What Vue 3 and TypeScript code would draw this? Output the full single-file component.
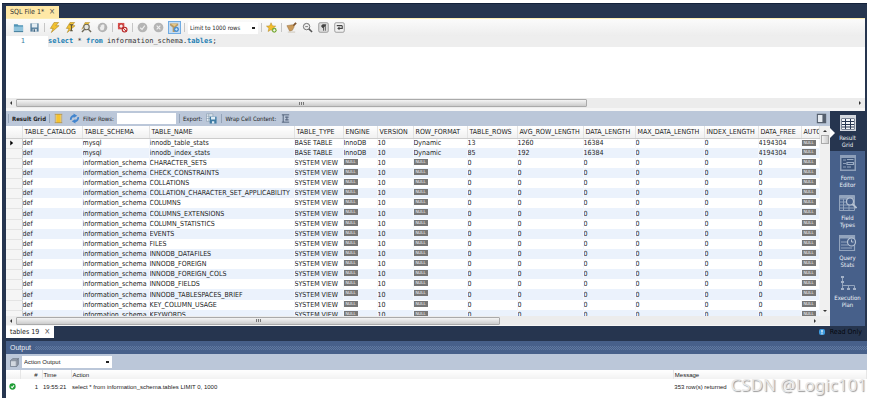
<script setup lang="ts">
import { ref } from 'vue'

interface Column {
  name: string
  width: string
}

const columns: Column[] = [
  { name: 'TABLE_CATALOG', width: '60px' },
  { name: 'TABLE_SCHEMA', width: '67px' },
  { name: 'TABLE_NAME', width: '145px' },
  { name: 'TABLE_TYPE', width: '49px' },
  { name: 'ENGINE', width: '34px' },
  { name: 'VERSION', width: '36px' },
  { name: 'ROW_FORMAT', width: '54px' },
  { name: 'TABLE_ROWS', width: '50px' },
  { name: 'AVG_ROW_LENGTH', width: '66px' },
  { name: 'DATA_LENGTH', width: '52px' },
  { name: 'MAX_DATA_LENGTH', width: '69px' },
  { name: 'INDEX_LENGTH', width: '54px' },
  { name: 'DATA_FREE', width: '43px' },
  { name: 'AUTO', width: 'auto' },
]

type Cell = string | null

const views: string[] = [
  'CHARACTER_SETS',
  'CHECK_CONSTRAINTS',
  'COLLATIONS',
  'COLLATION_CHARACTER_SET_APPLICABILITY',
  'COLUMNS',
  'COLUMNS_EXTENSIONS',
  'COLUMN_STATISTICS',
  'EVENTS',
  'FILES',
  'INNODB_DATAFILES',
  'INNODB_FOREIGN',
  'INNODB_FOREIGN_COLS',
  'INNODB_FIELDS',
  'INNODB_TABLESPACES_BRIEF',
  'KEY_COLUMN_USAGE',
  'KEYWORDS',
]

const rows: Cell[][] = [
  ['def', 'mysql', 'innodb_table_stats', 'BASE TABLE', 'InnoDB', '10', 'Dynamic', '13', '1260', '16384', '0', '0', '4194304', null],
  ['def', 'mysql', 'innodb_index_stats', 'BASE TABLE', 'InnoDB', '10', 'Dynamic', '85', '192', '16384', '0', '0', '4194304', null],
  ...views.map((name): Cell[] => ['def', 'information_schema', name, 'SYSTEM VIEW', null, '10', null, '0', '0', '0', '0', '0', '0', null]),
]

const limit = ref('Limit to 1000 rows')
const output = ref('Action Output')
const filter = ref('')
</script>

<template>
  <main class="window">
    <section class="top">
      <div class="tabs">
        <button class="tab file">SQL File 1* <span class="x">×</span></button>
      </div>

      <div class="toolbar">
        <button aria-label="Open file">
          <svg viewBox="0 0 12 12"><path d="M1 2.5h4l1 1h5v7H1z" fill="#4f93b5" /><path d="M1 5h10v5.5H1z" fill="#8fc3dc" /><path d="M1 10.5h10" stroke="#3d7796" /></svg>
        </button>
        <button aria-label="Save file">
          <svg viewBox="0 0 12 12"><path d="M1.5 1.5h9v9h-9z" fill="#557f9d" /><path d="M3 1.5h6V6H3z" fill="#e4edf3" /><path d="M4 7.5h4.500v3H4z" fill="#d6e0e8" /><path d="M5 8h1.500v2.500H5z" fill="#3e627c" /></svg>
        </button>
        <i class="sep"></i>
        <button aria-label="Execute">
          <svg viewBox="0 0 12 12"><path d="M5.500.5h5L7.500 4H11L2.500 11.500 4.500 7H1.500z" fill="#f2c232" stroke="#a8801c" stroke-width=".6" /></svg>
        </button>
        <button aria-label="Execute current statement">
          <svg viewBox="0 0 12 12"><path d="M5.500.5h5L7.500 4H11L2.500 11.500 4.500 7H1.500z" fill="#f2c232" stroke="#a8801c" stroke-width=".6" /><path d="M5 3h4M7 3v6M5.500 9.500h3" stroke="#5a5137" stroke-width="1.100" /></svg>
        </button>
        <button aria-label="Explain statement">
          <svg viewBox="0 0 12 12"><path d="M4.500.5h5L7 3H4L1 8z" fill="#f2c232" stroke="#a8801c" stroke-width=".5" /><circle cx="6" cy="5.500" r="3" fill="#e6e6df" stroke="#6c6858" stroke-width="1.200" /><path d="M8 8l3 3M4 8l-3 3" stroke="#6c6858" stroke-width="1.500" /></svg>
        </button>
        <button aria-label="Stop">
          <svg viewBox="0 0 12 12"><circle cx="6" cy="6" r="5.200" fill="#b3b3b3" /><path d="M4 9L3 6l1-.5V3.500h1V3h1v-.5h1V3h1v3.500L7 9z" fill="#ededed" /></svg>
        </button>
        <i class="sep"></i>
        <button aria-label="Toggle stop on error">
          <svg viewBox="0 0 12 12"><path d="M1 1h7v7H1z" fill="#da514d" /><circle cx="4.500" cy="4.500" r="2.300" fill="#f8e9e6" stroke="#b72525" /><circle cx="8.300" cy="8.300" r="2.600" fill="#f6dcd8" stroke="#b72525" stroke-width="1.200" /><path d="M6.500 6.500l3.600 3.600" stroke="#b72525" /></svg>
        </button>
        <i class="sep"></i>
        <button aria-label="Commit">
          <svg viewBox="0 0 12 12"><circle cx="6" cy="6" r="5.300" fill="#b5b5b5" /><path d="M3.500 6.300l2 1.700 3-4" fill="none" stroke="#f0f0f0" stroke-width="1.200" /></svg>
        </button>
        <button aria-label="Rollback">
          <svg viewBox="0 0 12 12"><circle cx="6" cy="6" r="5.300" fill="#b5b5b5" /><path d="M4 4l4 4M8 4L4 8" stroke="#f0f0f0" stroke-width="1.200" /></svg>
        </button>
        <button class="on" aria-label="Toggle autocommit">
          <svg viewBox="0 0 12 12"><path d="M1 1.500h9v2L7 6v5H4V6L1 3.500z" fill="#b99a63" /><path d="M2 2h7L6 5z" fill="#e4c788" /><circle cx="8" cy="8" r="2.800" fill="#4b8fd0" /><path d="M6.500 8h3M8 6.500v3" stroke="#e4f2ff" stroke-width=".8" /></svg>
        </button>
        <i class="sep"></i>
        <select v-model="limit" class="limit" aria-label="Row limit">
          <option>Limit to 1000 rows</option>
        </select>
        <i class="sep"></i>
        <button aria-label="Save snippet">
          <svg viewBox="0 0 12 12"><path d="M5.500.8l1.500 3.400 3.600.3-2.800 2.300.9 3.600-3.200-2-3.200 2 .9-3.600L.5 4.500l3.600-.3z" fill="#f4bd2c" stroke="#a67e1c" stroke-width=".5" /><circle cx="9" cy="9" r="2.600" fill="#74a832" /><path d="M7.500 9h3M9 7.500v3" stroke="#fff" /></svg>
        </button>
        <i class="sep"></i>
        <button aria-label="Beautify">
          <svg viewBox="0 0 12 12"><path d="M7 5l4-4" stroke="#80552d" stroke-width="2" /><path d="M1 4l6-1 2 2-2 4-3 1z" fill="#c99a5b" stroke="#8f6532" stroke-width=".5" /><path d="M2 11h8" stroke="#cbc4b8" /></svg>
        </button>
        <button aria-label="Find">
          <svg viewBox="0 0 12 12"><circle cx="5" cy="5" r="3.500" fill="#eee" stroke="#666" /><path d="M7.500 7.500L11 11" stroke="#555" stroke-width="1.600" /><path d="M3.500 5h3" stroke="#777" /></svg>
        </button>
        <button aria-label="Toggle invisible characters">
          <svg viewBox="0 0 12 12"><rect x=".8" y=".8" width="10.400" height="10.400" rx="1.500" fill="#ddd" stroke="#999" /><path d="M8.500 3H5.500a1.500 1.500 0 000 3H6zM6 3v6.500M8 3v6.500" fill="#444" stroke="#444" stroke-width=".9" /></svg>
        </button>
        <button aria-label="Toggle word wrap">
          <svg viewBox="0 0 12 12"><rect x=".8" y=".8" width="10.400" height="10.400" rx="1.500" fill="#f0f0f0" stroke="#999" /><path d="M3 4h6M9 4v3H5" fill="none" stroke="#444" stroke-width="1.200" /><path d="M6 5v4L3.500 7z" fill="#444" /></svg>
        </button>
      </div>

      <div class="editor">
        <span class="lineno">1</span>
        <code class="line"><b>select</b> * <b>from</b> information_schema.<b>tables</b>;</code>
      </div>

      <div class="hbar">
        <svg class="arrow" viewBox="0 0 8 8"><path d="M5 2v4L3 4z" /></svg>
        <div class="track"><div class="thumb code-thumb"><i class="grip"></i></div></div>
        <svg class="arrow" viewBox="0 0 8 8"><path d="M3 2v4l2-2z" /></svg>
      </div>

      <div class="result">
        <div class="grid-side">
          <div class="resultbar">
            <i class="sep"></i>
            <strong>Result Grid</strong>
            <i class="sep"></i>
            <button class="col-icon" aria-label="Columns">
              <svg viewBox="0 0 12 12"><path d="M2 1h8v10H2z" fill="#d8e2ee" /><path d="M3.500 1h5v10h-5z" fill="#f5c330" /><path d="M2 1.500h8M2 10.500h8M2.500 1v10M9.500 1v10" stroke="#b0904a" stroke-width=".8" /></svg>
            </button>
            <button class="refresh" aria-label="Refresh">
              <svg viewBox="0 0 12 12"><path d="M2 7.500A4 4 0 015.500 3" fill="none" stroke="#4285ce" stroke-width="2" /><path d="M5 .5l4 2.500-4 2.500z" fill="#4285ce" /><path d="M10 4.500A4 4 0 016.500 9" fill="none" stroke="#4285ce" stroke-width="2" /><path d="M7 6.500v5L3 9z" fill="#4285ce" /></svg>
            </button>
            <label for="filter">Filter Rows:</label>
            <input id="filter" v-model="filter" type="text" />
            <i class="sep"></i>
            <span>Export:</span>
            <button class="export" aria-label="Export">
              <svg viewBox="0 0 12 12"><path d="M.5 1h7v8h-7z" fill="#e8eff5" stroke="#7a91a6" stroke-width=".6" /><path d="M.5 3.500h7M.5 6h7M3 1v8" stroke="#7a91a6" stroke-width=".6" /><path d="M4 4h7.500v7.500H4z" fill="#3e7ba4" /><path d="M5.500 4H10v3H5.500zM6.500 9H9v2.500H6.500z" fill="#e0edf5" /></svg>
            </button>
            <i class="sep"></i>
            <span>Wrap Cell Content:</span>
            <button class="wrap" aria-label="Wrap cell content">
              <svg viewBox="0 0 12 12"><path d="M2 2h8M2 10h8M3.500 2v8M5.500 4.500h4M5.500 7.500h4M7.500 4v4" fill="none" stroke="#4c5c75" stroke-width="1" /></svg>
            </button>
            <button class="panel-toggle" aria-label="Toggle side panel">
              <svg viewBox="0 0 12 12"><path d="M1.500 1.500h9v9h-9z" fill="#e6ebf1" stroke="#555f6e" stroke-width="1.200" /><path d="M7 2h3.500v8H7z" fill="#555f6e" /></svg>
            </button>
          </div>
          <div class="grid-body">
            <div class="viewport">
              <table>
                <colgroup>
                  <col class="gutter-col" />
                  <col v-for="c in columns" :key="c.name" :style="{ width: c.width }" />
                </colgroup>
                <thead>
                  <tr>
                    <th class="gutter"></th>
                    <th v-for="c in columns" :key="c.name">{{ c.name }}</th>
                  </tr>
                </thead>
                <tbody>
                  <tr v-for="(row, r) in rows" :key="r">
                    <td class="gutter">
                      <svg v-if="r === 0" class="marker" viewBox="0 0 6 6"><path d="M1.500 0v6L5 3z" /></svg>
                    </td>
                    <td v-for="(cell, c) in row" :key="c" :class="{ empty: cell === null }">
                      <span v-if="cell === null" class="null">NULL</span>
                      <template v-else>{{ cell }}</template>
                    </td>
                  </tr>
                </tbody>
              </table>
            </div>
            <div class="vbar">
              <svg class="arrow" viewBox="0 0 8 8"><path d="M2 5h4L4 3z" /></svg>
              <div class="vthumb"></div>
              <svg class="arrow end" viewBox="0 0 8 8"><path d="M2 3h4L4 5z" /></svg>
            </div>
          </div>
          <div class="hbar grid-hbar">
            <svg class="arrow" viewBox="0 0 8 8"><path d="M5 2v4L3 4z" /></svg>
            <div class="track"><div class="thumb grid-thumb"><i class="grip"></i></div></div>
            <svg class="arrow last" viewBox="0 0 8 8"><path d="M3 2v4l2-2z" /></svg>
          </div>
        </div>

        <nav class="side">
          <button class="active">
            <svg viewBox="0 0 16 16"><path d="M0 0h16v16H0z" fill="#d4d8de" /><path d="M1.500 3.500h13v11h-13z" fill="#26354f" /><path d="M2 4h3v2H2zM6 4h4v2H6zM11 4h3v2h-3zM2 7h3v2H2zM6 7h4v2H6zM11 7h3v2h-3zM2 10h3v1.500H2zM6 10h4v1.500H6zM11 10h3v1.500h-3zM2 12.500h3V14H2zM6 12.500h4V14H6zM11 12.500h3V14h-3z" fill="#f4f6f8" /></svg>
            <span>Result<br />Grid</span>
          </button>
          <button>
            <svg viewBox="0 0 16 16"><path d="M0 0h16v16H0z" fill="#8e9fb9" /><path d="M1.500 3h13v11.500h-13z" fill="#3b5379" /><path d="M3 5h3M3 8.500h3M3 12h3" stroke="#8e9fb9" stroke-width="1.200" /><path d="M7 4.500h6.500M7 7.500h6.500v2H7zM7 12h4" fill="none" stroke="#9aabc3" stroke-width="1.200" /></svg>
            <span>Form<br />Editor</span>
          </button>
          <button>
            <svg class="wide" viewBox="0 0 18 16"><path d="M.5.5h15v15H.5zM.5 4h15M.5 7h15M.5 10h15M.5 13h15M4.500 4v11M10 4v11" fill="none" stroke="#93a4bd" /><path d="M.5.5h15v3H.5z" fill="#93a4bd" /><circle cx="11" cy="6.500" r="3.500" fill="#47608a" stroke="#b6c2d3" stroke-width="1.200" /><path d="M13.500 9l4 4" stroke="#b6c2d3" stroke-width="1.800" /></svg>
            <span>Field<br />Types</span>
          </button>
          <button>
            <svg class="wide" viewBox="0 0 18 16"><path d="M.5.5h15v15H.5zM2 7h6M2 10h7M2 13h11" fill="none" stroke="#93a4bd" stroke-width="1.200" /><path d="M.5.5h15v3H.5z" fill="#93a4bd" /><circle cx="12.500" cy="7" r="4" fill="#47608a" stroke="#b6c2d3" stroke-width="1.200" /><path d="M12.500 4.500V7h2" fill="none" stroke="#b6c2d3" /></svg>
            <span>Query<br />Stats</span>
          </button>
          <button>
            <svg viewBox="0 0 16 16"><path d="M1 1h3v2H1zM1 6h3v2H1zM1 13h3v2H1zM7 13h3v2H7zM13 13h3v2h-3z" fill="#a3b1c7" /><path d="M2.500 3v3M2.500 8v5M2.500 10.500h12V13M8.500 10.500V13" fill="none" stroke="#93a4bd" /></svg>
            <span>Execution<br />Plan</span>
          </button>
        </nav>
      </div>

      <div class="tabs bottom">
        <button class="tab white">tables 19 <span class="x">×</span></button>
        <div class="readonly">
          <svg viewBox="0 0 8 8"><rect x="1" y="1" width="6" height="6" rx="2" fill="#3d9be0" /><path d="M4 2v2.500M4 5.300v1" stroke="#fff" stroke-width="1.200" /></svg>
          <span>Read Only</span>
        </div>
      </div>
    </section>

    <section class="output">
      <header><span>Output</span><i class="dots"></i></header>
      <div class="outbar">
        <svg viewBox="0 0 10 10"><path d="M3 .5h6.500v6.500l-2 2.500H.5V3z" fill="#d2d8e0" stroke="#667181" stroke-width=".8" /><path d="M.5 3h6.500v6.500M7 3L9.500.5M2 1.800h6.300v6.300" fill="none" stroke="#667181" stroke-width=".8" /></svg>
        <select v-model="output" aria-label="Output type">
          <option>Action Output</option>
        </select>
      </div>
      <table class="log">
        <colgroup>
          <col class="c-icon" /><col class="c-num" /><col class="c-time" /><col class="c-action" /><col />
        </colgroup>
        <thead>
          <tr><th></th><th class="num">#</th><th>Time</th><th>Action</th><th>Message</th></tr>
        </thead>
        <tbody>
          <tr>
            <td><svg class="ok" viewBox="0 0 8 8"><circle cx="4" cy="4" r="3.600" fill="#1f9d35" /><path d="M2.300 4l1.300 1.300 2.200-2.600" fill="none" stroke="#fff" stroke-width="1.200" /></svg></td>
            <td class="num">1</td>
            <td>19:55:21</td>
            <td>select * from information_schema.tables LIMIT 0, 1000</td>
            <td>353 row(s) returned</td>
          </tr>
        </tbody>
      </table>
      <div class="watermark">CSDN @Logic101</div>
    </section>
  </main>
</template>

<style>
body {
  background: #fff;
}
html,
body,
#app {
  height: 100%;
}
</style>

<style scoped>
* {
  box-sizing: border-box;
}
.window {
  --navy: #26354f;
  --blue: #47608a;
  --bar: #bbc7d9;
  height: 100%;
  display: flex;
  flex-direction: column;
  padding: 3px 2px 2px;
  font: 6px/8px "DejaVu Sans Condensed", "DejaVu Sans", sans-serif;
  color: #222;
  overflow: hidden;
}
button {
  border: 0;
  padding: 0;
  margin: 0;
  background: none;
  font: inherit;
  color: inherit;
  display: flex;
  align-items: center;
  justify-content: center;
}
select,
input {
  border: 0;
  margin: 0;
  border-radius: 0;
  font: inherit;
  color: inherit;
  background: #fff;
  outline: 0;
}
select {
  appearance: none;
  background: #fff linear-gradient(#222, #222) no-repeat right 3px center / 3px 2px;
}
svg {
  display: block;
  flex: none;
}
.top {
  flex: 1;
  min-height: 0;
  display: flex;
  flex-direction: column;
  background: var(--navy);
  padding: 2px 2px 0 4px;
  border-top: 1px solid #13213a;
}
.tabs {
  display: flex;
  height: 12px;
  flex: none;
}
.tab {
  padding: 0 4px;
  gap: 5px;
  font-size: 7px;
}
.file {
  background: #ffe8a6;
  color: #333;
}
.x {
  font-size: 8px;
  color: #555;
}
.toolbar {
  flex: none;
  height: 18px;
  display: flex;
  align-items: center;
  gap: 3px;
  padding: 0 6px;
  border-top: 1px solid #fdeeb5;
  background: linear-gradient(#fbfbfb, #ededed);
}
.toolbar button {
  width: 13px;
  height: 13px;
}
.toolbar svg {
  width: 11px;
  height: 11px;
}
.toolbar .on {
  background: #c4dcf3;
  border: 1px solid #6fabe3;
}
.sep {
  width: 1px;
  height: 9px;
  background: #c6c6c6;
}
.limit {
  width: 70px;
  height: 12px;
  padding: 0 2px;
}
.editor {
  flex: none;
  height: 62px;
  display: flex;
  align-items: flex-start;
  background: #fff;
  font: 7px/11px "DejaVu Sans Mono", monospace;
}
.lineno {
  width: 42px;
  padding-right: 23px;
  text-align: right;
  color: #3d7fa3;
}
.line {
  flex: 1;
  background: #eee;
  font: inherit;
  color: #333;
}
.line b {
  color: #1c7fb4;
}
.hbar {
  flex: none;
  height: 13px;
  display: flex;
  align-items: center;
  background: #ececec;
  border-bottom: 3px solid #f6f6f6;
}
.arrow {
  width: 10px;
  height: 8px;
  fill: #333;
}
.track {
  flex: 1;
}
.thumb {
  height: 8px;
  border: 1px solid #aaa;
  border-radius: 1px;
  background: linear-gradient(#f4f4f4, #ccc);
  display: flex;
  align-items: center;
  justify-content: center;
}
.grip {
  width: 5px;
  height: 3px;
  background: repeating-linear-gradient(90deg, #777 0 1px, #ddd 1px 2px);
}
.code-thumb {
  width: 68%;
}
.result {
  flex: 1;
  min-height: 0;
  display: flex;
}
.grid-side {
  flex: 1;
  min-width: 0;
  display: flex;
  flex-direction: column;
}
.resultbar {
  flex: none;
  height: 15px;
  display: flex;
  align-items: center;
  gap: 3px;
  padding: 0 3px 0 2px;
  background: var(--bar);
}
.resultbar .sep {
  background: #94a3b8;
}
.resultbar svg {
  width: 11px;
  height: 11px;
}
.refresh {
  margin-left: 2px;
}
.resultbar input {
  width: 59px;
  height: 11px;
}
.export {
  margin: 0 1px;
}
.wrap {
  margin-left: 1px;
}
.panel-toggle {
  margin-left: auto;
}
.grid-body {
  flex: 1;
  min-height: 0;
  display: flex;
  background: #fff;
}
.viewport {
  flex: 1;
  min-width: 0;
  overflow: hidden;
  font-size: 7px;
}
table {
  width: 100%;
  table-layout: fixed;
  border-collapse: collapse;
}
.gutter-col {
  width: 16px;
}
th,
td {
  padding: 0 1px;
  text-align: left;
  font-weight: normal;
  white-space: nowrap;
  overflow: hidden;
}
.viewport th {
  height: 12px;
  padding: 0 0 0 2px;
  border-right: 1px solid #e2e2e2;
  border-bottom: 1px solid #ccc;
  background: linear-gradient(#fff, #f0f0f0);
}
.viewport td {
  height: 10px;
  padding: 0;
}
.viewport tbody tr:nth-child(8n) td {
  height: 11px;
}
.viewport tbody tr:nth-child(even) {
  background: #ebf2fc;
}
.viewport td + td {
  border-right: 1px solid #f4f7fb;
}
.viewport td.gutter {
  background: #f5f5f5;
  border-right: 1px solid #ccc;
  border-bottom: 1px solid #e4e4e4;
}
.marker {
  width: 5px;
  height: 6px;
  margin-left: 3px;
}
.viewport td.empty {
  vertical-align: top;
  padding-top: 1px;
}
.null {
  display: block;
  width: 14px;
  height: 6px;
  background: #777;
  color: #fff;
  font: 4px/6px "Liberation Sans", sans-serif;
  text-align: center;
}
.vbar {
  width: 10px;
  display: flex;
  flex-direction: column;
  align-items: center;
  background: #f0f0f0;
  padding: 1px 0;
}
.vthumb {
  width: 8px;
  height: 9px;
  border: 1px solid #aaa;
  background: linear-gradient(90deg, #f4f4f4, #ccc);
}
.end {
  margin-top: auto;
}
.grid-hbar {
  height: 10px;
  border-bottom: 1px solid #f6f6f6;
}
.grid-thumb {
  width: 61%;
}
.last {
  margin-right: 10px;
}
.side {
  width: 35px;
  display: flex;
  flex-direction: column;
  background: var(--blue);
  color: #eef2f7;
}
.side button {
  position: relative;
  flex-direction: column;
  justify-content: flex-start;
  gap: 3px;
  height: 40px;
  padding-top: 4px;
  line-height: 7px;
  text-align: center;
}
.side .active {
  background: var(--navy);
}
.side .active::before {
  content: "";
  position: absolute;
  left: 0;
  top: 17px;
  border: 5px solid transparent;
  border-left-color: #fff;
  border-right: 0;
}
.side svg {
  width: 16px;
  height: 16px;
}
.side .wide {
  width: 18px;
}
.bottom {
  height: 15px;
  align-items: flex-start;
  justify-content: space-between;
}
.white {
  height: 12px;
  background: #fff;
}
.readonly {
  display: flex;
  align-items: center;
  gap: 4px;
  height: 12px;
  padding-right: 3px;
  color: #04070d;
  font-size: 7px;
}
.readonly svg {
  width: 8px;
  height: 8px;
}
.output {
  position: relative;
  flex: none;
  height: 57px;
  border-left: 4px solid var(--navy);
  font-family: "Liberation Sans", sans-serif;
}
.output header {
  height: 13px;
  display: flex;
  align-items: center;
  gap: 4px;
  padding-left: 4px;
  background: var(--blue);
  color: #eef2f7;
  font-size: 7px;
}
.dots {
  flex: 1;
  height: 4px;
  background: repeating-conic-gradient(#6079a0 0 25%, #47608a 0 50%) 0 0 / 2px 2px;
}
.outbar {
  height: 16px;
  display: flex;
  align-items: center;
  gap: 3px;
  padding-left: 4px;
  background: var(--bar);
}
.outbar svg {
  width: 9px;
  height: 9px;
}
.outbar select {
  width: 90px;
  height: 12px;
  padding: 0 2px;
}
.log th {
  height: 9px;
  background: linear-gradient(#fff, #f2f2f2);
  border-right: 1px solid #e6e6e6;
}
.log td {
  height: 15px;
}
.log .num {
  text-align: right;
  padding-right: 4px;
}
.c-icon {
  width: 14px;
}
.c-num {
  width: 22px;
}
.c-time {
  width: 29px;
}
.c-action {
  width: 70%;
}
.ok {
  width: 7px;
  height: 7px;
  margin-left: 2px;
}
.watermark {
  position: absolute;
  right: 0;
  bottom: 3px;
  font: 17px/20px "Noto Sans", sans-serif;
  color: #e8e8e8;
  text-shadow: 1px 1px 1px #999;
}
</style>
